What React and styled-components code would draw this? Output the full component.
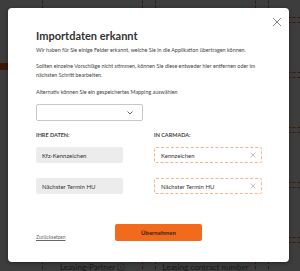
import React from 'react'
import styled, { createGlobalStyle } from 'styled-components'

const GlobalStyle = createGlobalStyle`
  html, body {
    margin: 0;
    padding: 0;
    width: 300px;
    height: 271px;
    overflow: hidden;
    font-family: Lato, "Liberation Sans", sans-serif;
  }
`

// Underlying page (dimmed by the overlay)
const Page = styled.div`
  position: relative;
  width: 300px;
  height: 271px;
  overflow: hidden;
  background: #fff;
  display: flex;
`
const Sidebar = styled.div`
  width: 30px;
  flex: none;
  padding-top: 63px;
`
const SideItem = styled.div`
  height: 7px;
  background: #f26b1d;
`
const Grid = styled.div`
  margin: -33px 0 0 12px;
  display: grid;
  grid-template-columns: repeat(3, 101px);
  grid-auto-rows: 51px;
  column-gap: 12px;
  row-gap: 4px;
`
const Cell = styled.div`
  box-sizing: border-box;
  border: 1px dashed #f26b1d;
  padding-top: 19px;
  text-align: center;
  font-size: 8px;
  line-height: 10px;
  color: #666;
  white-space: nowrap;
`
const Overlay = styled.div`
  position: absolute;
  inset: 0;
  background: rgba(0, 0, 0, 0.76);
`

// Modal
const Modal = styled.div`
  position: absolute;
  left: 8px;
  top: 8px;
  width: 281px;
  height: 254px;
  box-sizing: border-box;
  padding: 21px 27px 0 28px;
  background: #fff;
  border-radius: 4px;
  box-shadow: 0 1px 4px rgba(0, 0, 0, 0.4);
  color: #333;
`
const Close = styled.button`
  position: absolute;
  right: 7px;
  top: 9px;
  width: 10px;
  height: 10px;
  padding: 0;
  border: 0;
  background: none;
  svg { display: block; }
`
const Title = styled.h1`
  margin: 0;
  font-size: 11px;
  line-height: 14px;
  font-weight: 700;
  color: #333;
`
const Text = styled.p`
  margin: ${p => p.mt}px 0 0;
  font-size: 5.4px;
  line-height: 9px;
  color: #444;
`
const Select = styled.div`
  margin-top: 7px;
  width: 107px;
  height: 17px;
  box-sizing: border-box;
  border: 1px solid #c8c8c8;
  border-radius: 2px;
  display: flex;
  align-items: center;
  justify-content: flex-end;
  padding-right: 9px;
  svg { display: block; }
`
const Mapping = styled.div`
  display: grid;
  grid-template-columns: 118px 108px;
`
const Label = styled.div`
  margin-top: 10px;
  font-size: 5.5px;
  line-height: 9px;
  font-weight: 700;
  text-transform: uppercase;
  color: #444;
`
const Field = styled.div`
  margin-top: ${p => p.mt}px;
  height: 16px;
  box-sizing: border-box;
  border-radius: 2px;
  display: flex;
  align-items: center;
  justify-content: space-between;
  padding: 0 5px 0 6px;
  font-size: 6px;
  color: #333;
  width: ${p => (p.source ? '87px' : '108px')};
  background: ${p => (p.source ? '#ececec' : '#fff')};
  border: ${p => (p.source ? 'none' : '1px dashed #f7b48a')};
  svg { display: block; }
`
const Footer = styled.div`
  margin-top: 30px;
  display: flex;
  align-items: flex-end;
`
const Reset = styled.a`
  width: 79px;
  font-size: 5px;
  line-height: 7px;
  color: #666;
  text-decoration: underline;
`
const Button = styled.button`
  width: 87px;
  height: 17px;
  border: 0;
  border-radius: 2px;
  background: #f26b1d;
  color: #3a2418;
  font-family: inherit;
  font-size: 6px;
  font-weight: 700;
  padding: 0;
`

const XIcon = ({ size, color, width = 1 }) => (
  <svg width={size} height={size} viewBox="0 0 10 10">
    <path d="M1 1 L9 9 M9 1 L1 9" stroke={color} strokeWidth={width} fill="none" />
  </svg>
)

const cells = [
  ['', '', ''], ['', '', ''], ['', '', 'Code'], ['', '', ''], ['', '', 'Serie'], ['Leasing-Partner ⓘ', 'Leasing contract number', 'Laufzeit']
]

const rows = [
  ['Kfz-Kennzeichen', 'Kennzeichen'],
  ['Nächster Termin HU', 'Nächster Termin HU']
]

export default function App() {
  return (
    <>
      <GlobalStyle />
      <Page>
        <Sidebar><SideItem /></Sidebar>
        <Grid>
          {cells.flat().map((t, i) => <Cell key={i}>{t}</Cell>)}
        </Grid>
        <Overlay />
        <Modal>
          <Close><XIcon size={10} color="#888" /></Close>
          <Title>Importdaten erkannt</Title>
          <Text mt={3}>Wir haben für Sie einige Felder erkannt, welche Sie in die Applikation übertragen können.</Text>
          <Text mt={7}>Sollten einzelne Vorschläge nicht stimmen, können Sie diese entweder hier entfernen oder im nächsten Schritt bearbeiten.</Text>
          <Text mt={8}>Alternativ können Sie ein gespeichertes Mapping auswählen</Text>
          <Select>
            <svg width="6" height="4" viewBox="0 0 6 4">
              <path d="M0.5 0.5 L3 3 L5.5 0.5" stroke="#444" strokeWidth="0.8" fill="none" />
            </svg>
          </Select>
          <Mapping>
            <Label>Ihre Daten:</Label>
            <Label>In Carmada:</Label>
            {rows.map(([src, dst], i) => (
              <React.Fragment key={src}>
                <Field source mt={i === 0 ? 7 : 15}>{src}</Field>
                <Field mt={i === 0 ? 7 : 15}>
                  {dst}
                  <XIcon size={6} color="#aaa" width={1.2} />
                </Field>
              </React.Fragment>
            ))}
          </Mapping>
          <Footer>
            <Reset>Zurücksetzen</Reset>
            <Button>Übernehmen</Button>
          </Footer>
        </Modal>
      </Page>
    </>
  )
}
